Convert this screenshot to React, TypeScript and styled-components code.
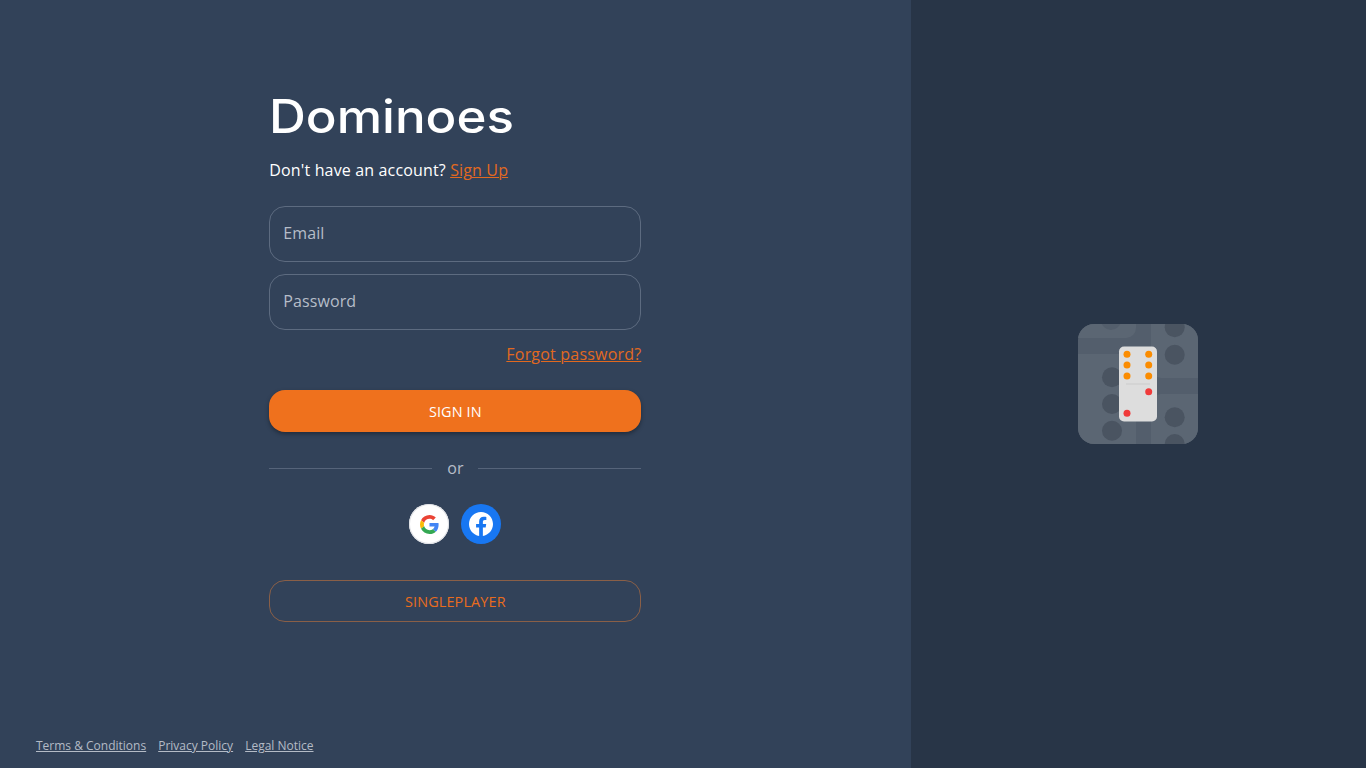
import styled, { createGlobalStyle } from 'styled-components'

const GlobalStyle = createGlobalStyle`
  html, body, #root {
    margin: 0;
    height: 100%;
  }

  body {
    font-family: 'Open Sans', 'Noto Sans', sans-serif;
    background: #283547;
  }

  * {
    box-sizing: border-box;
  }
`

const Page = styled.div`
  display: flex;
  height: 768px;
  overflow: hidden;
`

const LeftPanel = styled.main`
  display: flex;
  flex-direction: column;
  align-items: center;
  width: 66.667%;
  height: 100%;
  background: #324259;
`

const RightPanel = styled.aside`
  display: flex;
  flex: 1;
  align-items: center;
  justify-content: center;
  background: #283547;
`

const Form = styled.form`
  display: flex;
  flex-direction: column;
  flex: 1;
  width: 372px;
  padding-top: 85px;
`

const Title = styled.h1`
  margin: 0;
  height: 64px;
  font-family: 'Inter', 'Open Sans', sans-serif;
  font-size: 46px;
  font-weight: 500;
  line-height: 63px;
  letter-spacing: 0;
  color: #ffffff;
  transform: scaleX(1.11);
  transform-origin: left center;
`

const Subtitle = styled.p`
  margin: 10px 0 0;
  font-size: 16px;
  line-height: 22px;
  letter-spacing: 0.15px;
  color: #ffffff;
`

const TextLink = styled.a`
  color: #e2691f;
  text-decoration: underline;
  text-decoration-thickness: 1px;
`

const Field = styled.div<{ $top: number }>`
  display: flex;
  align-items: center;
  height: 56px;
  margin-top: ${({ $top }) => $top}px;
  padding: 0 13px 2px;
  border: 1px solid #5d6b80;
  border-radius: 16px;
  font-size: 16px;
  letter-spacing: 0.1px;
  color: #b6bdc8;
`

const ForgotRow = styled.div`
  display: flex;
  justify-content: flex-end;
  margin-top: 13px;
  font-size: 16px;
  line-height: 22px;
  letter-spacing: 0.2px;
`

const PrimaryButton = styled.button`
  height: 42px;
  margin-top: 25px;
  padding: 0;
  border: none;
  border-radius: 16px;
  background: #ef711d;
  box-shadow: 0 2px 4px rgba(0, 0, 0, 0.35);
  font-family: inherit;
  font-size: 14.4px;
  letter-spacing: 0.15px;
  color: #ffffff;
`

const Divider = styled.div`
  display: flex;
  align-items: center;
  gap: 15px;
  margin-top: 25px;
  height: 22px;
  font-size: 16px;
  color: #b6bdc8;

  &::before,
  &::after {
    content: '';
    flex: 1;
    height: 1px;
    background: #56647a;
  }
`

const SocialRow = styled.div`
  display: flex;
  justify-content: center;
  gap: 12px;
  margin-top: 25px;
`

const SocialButton = styled.button<{ $bg: string; $ring?: boolean }>`
  display: flex;
  align-items: center;
  justify-content: center;
  width: 40px;
  height: 40px;
  padding: 0;
  border: none;
  border-radius: 50%;
  background: ${({ $bg }) => $bg};
  box-shadow: ${({ $ring }) => ($ring ? 'inset 0 0 0 1px #dfe1e5' : 'none')};
`

const OutlineButton = styled.button`
  height: 42px;
  margin-top: 36px;
  padding: 0;
  border: 1px solid #8a5f47;
  border-radius: 16px;
  background: transparent;
  font-family: inherit;
  font-size: 14.4px;
  letter-spacing: 0.15px;
  color: #e96c1d;
`

const Footer = styled.footer`
  display: flex;
  align-self: stretch;
  gap: 12px;
  padding: 0 36px 14px;
  font-size: 12px;
  line-height: 16px;
`

const FooterLink = styled.a`
  color: #b4bbc6;
  text-decoration: underline;
`

const GoogleIcon = () => (
  <svg width="19" height="19" viewBox="0 0 48 48">
    <path fill="#EA4335" d="M24 9.5c3.5 0 6.700 1.300 9.100 3.500l6.800-6.800C35.800 2.400 30.300 0 24 0 14.600 0 6.500 5.400 2.600 13.200l7.900 6.100C12.400 13.700 17.700 9.500 24 9.500z" />
    <path fill="#4285F4" d="M47 24.500c0-1.600-.2-3.100-.4-4.500H24v9.100h12.900c-.6 3-2.200 5.500-4.700 7.200l7.700 6C44.400 38.100 47 31.800 47 24.500z" />
    <path fill="#FBBC05" d="M10.500 28.700c-.5-1.400-.8-3-.8-4.700s.3-3.200.8-4.700l-7.900-6.100C1 16.400 0 20.100 0 24s1 7.600 2.600 10.800l7.900-6.100z" />
    <path fill="#34A853" d="M24 48c6.500 0 11.900-2.100 15.900-5.800l-7.700-6c-2.200 1.400-4.900 2.300-8.200 2.300-6.300 0-11.600-4.200-13.500-9.800l-7.900 6.100C6.500 42.600 14.600 48 24 48z" />
  </svg>
)

const FacebookIcon = () => (
  <svg width="24" height="24" viewBox="0 0 24 24">
    <path
      fill="#ffffff"
      d="M24 12.070C24 5.400 18.630 0 12 0S0 5.400 0 12.070c0 6.030 4.390 11.020 10.130 11.930v-8.440H7.080v-3.490h3.050V9.410c0-3.020 1.790-4.690 4.530-4.690 1.310 0 2.680.24 2.680.24v2.970h-1.510c-1.490 0-1.960.93-1.960 1.880v2.260h3.330l-.53 3.490h-2.800V24C19.610 23.090 24 18.100 24 12.070z"
    />
  </svg>
)

const DominoArt = () => (
  <svg width="120" height="120" viewBox="0 0 120 120">
    <defs>
      <clipPath id="tile">
        <rect width="120" height="120" rx="16" />
      </clipPath>
    </defs>
    <g clipPath="url(#tile)">
      <rect width="120" height="120" fill="#535e6c" />
      <g fill="#5b6673">
        <path d="M0 0h58v4a10 10 0 0 1-10 10H0z" />
        <path d="M0 30h58v90H0z" />
        <path d="M73 0h47v54H83a10 10 0 0 1-10-10z" />
        <path d="M83 70h37v50H73V80a10 10 0 0 1 10-10z" />
      </g>
      <g fill="#4a5461">
        <circle cx="96.700" cy="3.300" r="10" />
        <circle cx="96.700" cy="30.700" r="10" />
        <circle cx="34" cy="53.300" r="10" />
        <circle cx="34" cy="80" r="10" />
        <circle cx="34" cy="106.700" r="10" />
        <circle cx="96.700" cy="93.300" r="10" />
        <circle cx="96.700" cy="120" r="10" />
      </g>
      <circle cx="33" cy="-4" r="10" fill="#535e6c" />
    </g>
    <rect x="41" y="22.500" width="38" height="75" rx="5" fill="#dddddd" />
    <rect x="48" y="59.500" width="24" height="1" fill="#cbcbcb" />
    <g fill="#fb8c00">
      <circle cx="49" cy="30.300" r="3.500" />
      <circle cx="49" cy="41" r="3.500" />
      <circle cx="49" cy="52" r="3.500" />
      <circle cx="70.700" cy="30.300" r="3.500" />
      <circle cx="70.700" cy="41" r="3.500" />
      <circle cx="70.700" cy="52" r="3.500" />
    </g>
    <g fill="#f03a3a">
      <circle cx="70.700" cy="67.700" r="3.500" />
      <circle cx="49" cy="89.300" r="3.500" />
    </g>
  </svg>
)

export default function App() {
  return (
    <>
      <GlobalStyle />
      <Page>
        <LeftPanel>
          <Form onSubmit={(e) => e.preventDefault()}>
            <Title>Dominoes</Title>
            <Subtitle>
              Don't have an account? <TextLink href="#">Sign Up</TextLink>
            </Subtitle>
            <Field $top={25}>Email</Field>
            <Field $top={12}>Password</Field>
            <ForgotRow>
              <TextLink href="#">Forgot password?</TextLink>
            </ForgotRow>
            <PrimaryButton type="submit">SIGN IN</PrimaryButton>
            <Divider>or</Divider>
            <SocialRow>
              <SocialButton type="button" $bg="#ffffff" $ring aria-label="Google">
                <GoogleIcon />
              </SocialButton>
              <SocialButton type="button" $bg="#1877f2" aria-label="Facebook">
                <FacebookIcon />
              </SocialButton>
            </SocialRow>
            <OutlineButton type="button">SINGLEPLAYER</OutlineButton>
          </Form>
          <Footer>
            <FooterLink href="#">Terms &amp; Conditions</FooterLink>
            <FooterLink href="#">Privacy Policy</FooterLink>
            <FooterLink href="#">Legal Notice</FooterLink>
          </Footer>
        </LeftPanel>
        <RightPanel>
          <DominoArt />
        </RightPanel>
      </Page>
    </>
  )
}
